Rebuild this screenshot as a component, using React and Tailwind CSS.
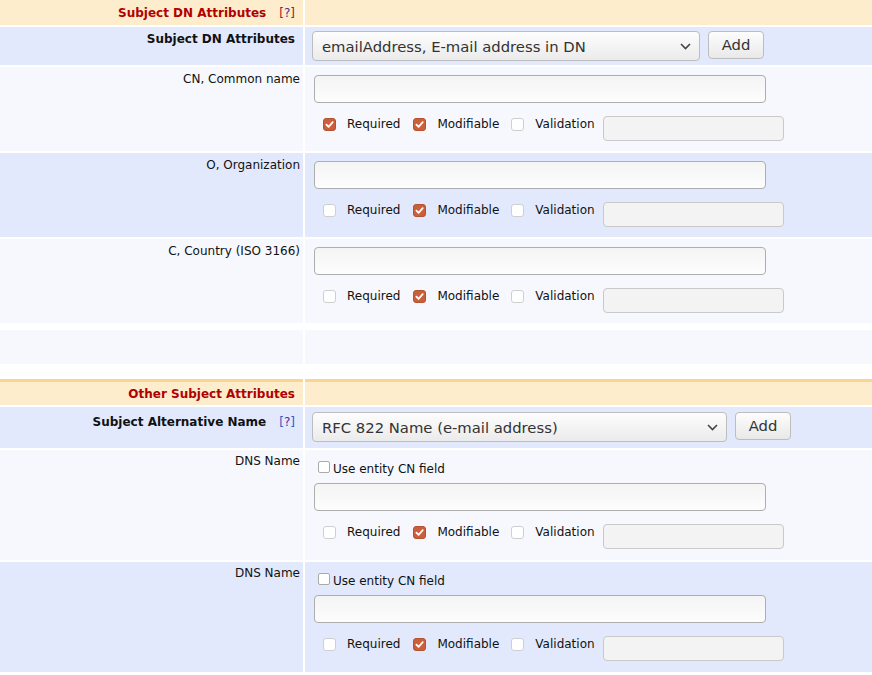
import React from 'react'

function Box({ checked, className = '' }) {
  if (checked) {
    return (
      <svg width="13" height="13" viewBox="0 0 13 13" className={`shrink-0 ${className}`}>
        <rect x="0.5" y="0.5" width="12" height="12" rx="2.5" fill="#cc5f3b" stroke="#b4532f" />
        <path d="M3.4 6.6 L5.6 8.8 L9.7 4.2" fill="none" stroke="#fff" strokeWidth="1.8" strokeLinecap="round" strokeLinejoin="round" />
      </svg>
    )
  }
  return <span className={`shrink-0 w-[13px] h-[13px] rounded-[3px] border border-[#cfcfcf] bg-white ${className}`} />
}

function Help({ tone = 'blue' }) {
  const bracket = tone === 'red' ? 'text-[#b0102a]' : 'text-[#3857c0]'
  return (
    <span className="ml-[13px] font-normal">
      <span className={bracket}>[</span>
      <span className="text-[#4d2e9c]">?</span>
      <span className={bracket}>]</span>
    </span>
  )
}

function Select({ value, width }) {
  return (
    <div className={`${width} h-[30px] flex items-center justify-between pl-[9px] pr-[8px] rounded-[4px] border border-[#bdbdbd] bg-gradient-to-b from-[#fdfdfd] to-[#ebebeb] text-[14.8px] text-[#333]`}>
      <span className="pt-[1px]">{value}</span>
      <svg width="11" height="7" viewBox="0 0 11 7">
        <path d="M1 1 L5.5 5.5 L10 1" fill="none" stroke="#444" strokeWidth="1.6" />
      </svg>
    </div>
  )
}

function AddButton() {
  return (
    <button className="w-[56px] h-[28px] rounded-[4px] border border-[#bdbdbd] bg-gradient-to-b from-[#fdfdfd] to-[#e9e9e9] text-[14.8px] text-[#333]">
      Add
    </button>
  )
}

function Flags({ required }) {
  return (
    <div className="flex items-start mt-[13px] ml-[9px]">
      <Box checked={required} className="mt-[2px]" />
      <span className="ml-[11px] mt-[1px] leading-[14px]">Required</span>
      <Box checked className="mt-[2px] ml-[13px]" />
      <span className="ml-[11px] mt-[1px] leading-[14px]">Modifiable</span>
      <Box checked={false} className="mt-[2px] ml-[12px]" />
      <span className="ml-[11px] mt-[1px] leading-[14px]">Validation</span>
      <div className="ml-[8px] w-[181px] h-[25px] rounded-[4px] border border-[#c9c9c9] bg-[#f3f3f3]" />
    </div>
  )
}

function TextInput() {
  return <div className="w-[452px] h-[28px] rounded-[4px] border border-[#aeaeae] bg-gradient-to-b from-[#f4f4f4] to-[#fdfdfd]" />
}

function Row({ bg, label, labelClass = 'pt-[5px] pr-[3px]', height, children, cellClass = '' }) {
  return (
    <div className="flex gap-x-[2px]">
      <div className={`w-[303px] shrink-0 text-right ${bg} ${height} ${labelClass}`}>{label}</div>
      <div className={`flex-1 ${bg} ${height} ${cellClass}`}>{children}</div>
    </div>
  )
}

function DnField({ bg, label, required }) {
  return (
    <Row bg={bg} label={label} height="h-[84px]" cellClass="pt-[8px] pl-[9px]">
      <TextInput />
      <Flags required={required} />
    </Row>
  )
}

function AltField({ bg }) {
  return (
    <Row bg={bg} label="DNS Name" labelClass="pt-[4px] pr-[3px]" height="h-[110px]" cellClass="pt-[11px] pl-[9px]">
      <div className="flex items-start ml-[4px]">
        <span className="w-[12px] h-[12px] rounded-[2px] border border-[#aaa] bg-white" />
        <span className="ml-[3px] mt-[1px] leading-[14px]">Use entity CN field</span>
      </div>
      <div className="mt-[7px]">
        <TextInput />
      </div>
      <Flags required={false} />
    </Row>
  )
}

export default function App() {
  const cream = 'bg-[#fdedcc]'
  const blue = 'bg-[#e2e9fc]'
  const pale = 'bg-[#f6f8fe]'

  return (
    <div className="w-[872px] h-[675px] overflow-hidden bg-white font-['DejaVu_Sans',sans-serif] text-[12px] leading-[14px] text-[#111]">
      <div className="flex flex-col gap-y-[2px]">
        <Row
          bg={cream}
          height="h-[25px]"
          labelClass="flex items-center justify-end pr-[8px] font-bold text-[#b00000]"
          label={<>Subject DN Attributes<Help tone="red" /></>}
        />
        <Row
          bg={blue}
          height="h-[38px]"
          labelClass="pt-[5px] pr-[8px] font-bold"
          label="Subject DN Attributes"
          cellClass="flex items-start gap-[8px] pt-[4px] pl-[7px]"
        >
          <Select value="emailAddress, E-mail address in DN" width="w-[388px]" />
          <AddButton />
        </Row>
        <DnField bg={pale} label="CN, Common name" required />
        <DnField bg={blue} label="O, Organization" required={false} />
        <DnField bg={pale} label="C, Country (ISO 3166)" required={false} />
      </div>

      <div className="mt-[7px]">
        <Row bg={pale} height="h-[34px]" label="" />
      </div>

      <div className="mt-[15px] flex flex-col gap-y-[2px]">
        <div className="flex gap-x-[2px]">
          <div className={`w-[303px] shrink-0 h-[26px] border-t-[3px] border-[#f9d594] ${cream} flex items-center justify-end pt-[1px] pr-[8px] font-bold text-[#b00000]`}>
            Other Subject Attributes
          </div>
          <div className={`flex-1 h-[26px] border-t-[3px] border-[#f9d594] ${cream}`} />
        </div>
        <Row
          bg={blue}
          height="h-[41px]"
          labelClass="pt-[8px] pr-[8px] font-bold"
          label={<>Subject Alternative Name<Help /></>}
          cellClass="flex items-start gap-[8px] pt-[5px] pl-[7px]"
        >
          <Select value="RFC 822 Name (e-mail address)" width="w-[415px]" />
          <AddButton />
        </Row>
        <AltField bg={pale} />
        <AltField bg={blue} />
      </div>
    </div>
  )
}
